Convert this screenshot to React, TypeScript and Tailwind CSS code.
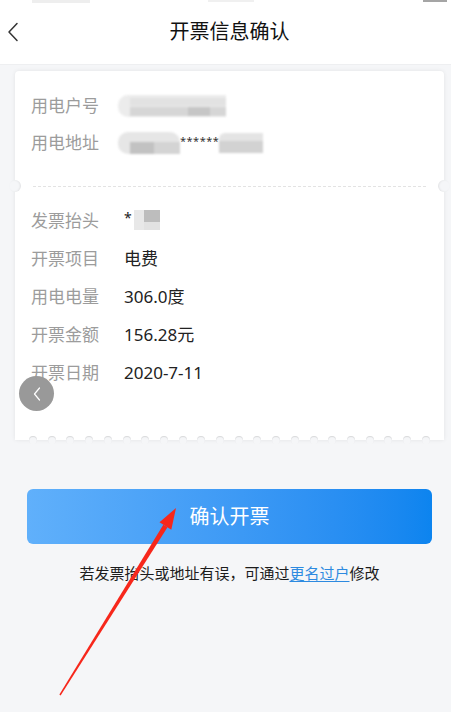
import React from "react";

const font = { fontFamily: '"Noto Sans", "Noto Sans CJK SC", sans-serif' };

function Row({ label, w, h, children }: { label: string; w: string; h: string; children: React.ReactNode }) {
  return (
    <div className={`flex items-center ${h}`}>
      <div className={`${w} shrink-0 text-[17px] text-[#9c9c9c] leading-none`}>{label}</div>
      <div className="flex items-center text-[17px] text-[#222] leading-none">{children}</div>
    </div>
  );
}

export default function App() {
  const scallops = Array.from({ length: 22 }, (_, i) => i);
  return (
    <div className="w-[469px] h-[712px] bg-white" style={font}>
      <div className="relative w-[451px] h-[712px] overflow-hidden">
        <div className="w-[459px] h-[712px] bg-[#f5f6f8] flex flex-col">
          {/* status bar remnant */}
          <div className="h-[3px] shrink-0 bg-white flex items-start">
            <div className="ml-[32px] w-[58px] h-[3px] bg-[#eeeeee]" />
            <div className="ml-[118px] w-[46px] h-[2px] bg-[#f0f0f0]" />
            <div className="ml-[169px] w-[24px] h-[2px] bg-[#a5a5a5]" />
          </div>
          {/* header */}
          <div className="h-[62px] shrink-0 bg-white grid grid-cols-[60px_1fr_60px] items-center border-b border-[#eeeff1]">
            <div className="pl-[7px] pb-[3px] flex items-center">
              <svg width="12" height="20" viewBox="0 0 12 20">
                <path d="M10 1.5 L2 10 L10 18.5" fill="none" stroke="#333" strokeWidth="1.5" strokeLinecap="round" strokeLinejoin="round" />
              </svg>
            </div>
            <div className="text-center pb-[3px] text-[20px] text-[#111] leading-none">开票信息确认</div>
            <div />
          </div>

          {/* card */}
          <div className="relative mx-[15px] mt-[6px] bg-white rounded-t-[4px] shadow-[0_0_4px_rgba(0,0,0,0.08)]">
            <div className="pl-[16px] pt-[16px] pb-[25px]">
              <Row label="用电户号" w="w-[87px]" h="h-[37px]">
                <div className="w-[108px] h-[22px] blur-[1px] rounded-l-[10px] bg-[#ececec] pl-[12px] flex flex-col pt-[3px] gap-[1px]">
                  <div className="h-[8px] bg-[#e2e2e2]" />
                  <div className="h-[9px] bg-[#d6d6d6] flex">
                    <div className="ml-[58px] w-[22px] bg-[#c6c6c6]" />
                  </div>
                </div>
              </Row>
              <Row label="用电地址" w="w-[87px]" h="h-[37px]">
                <div className="w-[62px] h-[22px] blur-[1px] rounded-l-[10px] rounded-tr-[10px] bg-[#e6e6e6] flex items-end pl-[12px]">
                  <div className="w-[24px] h-[12px] bg-[#c2c2c2]" />
                  <div className="w-[26px] h-[12px] bg-[#d4d4d4]" />
                </div>
                <span className="text-[11px] text-[#333] tracking-[0.5px] mt-[-4px]">******</span>
                <div className="w-[44px] h-[20px] blur-[1px] rounded-l-[6px] bg-[#e4e4e4] flex items-end">
                  <div className="w-full h-[12px] bg-[#d2d2d2]" />
                </div>
              </Row>
            </div>

            {/* dashed separator with notches */}
            <div className="relative h-[1px] mx-[18px] border-t border-dashed border-[#e3e3e3]">
              <div className="absolute left-[-24px] top-[-7px] w-[12px] h-[12px] rounded-full bg-[#f5f6f8] shadow-[inset_-1px_0_2px_rgba(0,0,0,0.08)]" />
              <div className="absolute right-[-24px] top-[-7px] w-[12px] h-[12px] rounded-full bg-[#f5f6f8] shadow-[inset_1px_0_2px_rgba(0,0,0,0.08)]" />
            </div>

            <div className="pl-[16px] pt-[14px] pb-[49px]">
              <Row label="发票抬头" w="w-[93px]" h="h-[38px]">
                <span className="text-[14px] mt-[-4px]">*</span>
                <div className="w-[26px] h-[20px] ml-[2px] blur-[0.6px] flex">
                  <div className="w-[10px] bg-[#e8e8e8]" />
                  <div className="w-[16px] flex flex-col">
                    <div className="h-[12px] bg-[#bdbdbd]" />
                    <div className="h-[8px] bg-[#e2e2e2]" />
                  </div>
                </div>
              </Row>
              <Row label="开票项目" w="w-[93px]" h="h-[38px]">电费</Row>
              <Row label="用电电量" w="w-[93px]" h="h-[38px]">306.0度</Row>
              <Row label="开票金额" w="w-[93px]" h="h-[38px]">156.28元</Row>
              <Row label="开票日期" w="w-[93px]" h="h-[38px]">2020-7-11</Row>
            </div>

            {/* scalloped bottom */}
            <div className="absolute left-[14px] right-[14px] bottom-[-4px] h-[8px] flex justify-between">
              {scallops.map((i) => (
                <div key={i} className="w-[8px] h-[8px] rounded-full bg-[#f5f6f8] shadow-[inset_0_1px_1px_rgba(0,0,0,0.12)]" />
              ))}
            </div>
          </div>

          {/* button */}
          <button className="mx-[27px] mt-[49px] h-[55px] rounded-[6px] bg-linear-to-r from-[#60b0fb] to-[#0c84ef] text-white text-[20px] leading-none flex items-center justify-center">
            确认开票
          </button>

          <div className="mt-[18px] text-center text-[15px] leading-[22px] text-[#1c1c1c]">
            若发票抬头或地址有误，可通过<span className="text-[#2d8ae0] underline underline-offset-2">更名过户</span>修改
          </div>
        </div>

        {/* floating grey back bubble */}
        <div className="absolute left-[19px] top-[376px] w-[35px] h-[35px] rounded-full bg-[#999999] flex items-center justify-center">
          <svg width="10" height="16" viewBox="0 0 10 16">
            <path d="M7.5 2 L2.5 8 L7.5 14" fill="none" stroke="#fff" strokeWidth="1.2" strokeLinecap="round" strokeLinejoin="round" />
          </svg>
        </div>

        {/* red annotation arrow */}
        <svg className="absolute left-0 top-0 pointer-events-none" width="451" height="712" viewBox="0 0 451 712">
          <polygon points="60.6,695.4 59.4,694.6 163.3,524.7 167.5,527.3" fill="#f7271b" />
          <polygon points="176,508 159.5,522.3 171.3,529.7" fill="#f7271b" />
        </svg>
      </div>
    </div>
  );
}
